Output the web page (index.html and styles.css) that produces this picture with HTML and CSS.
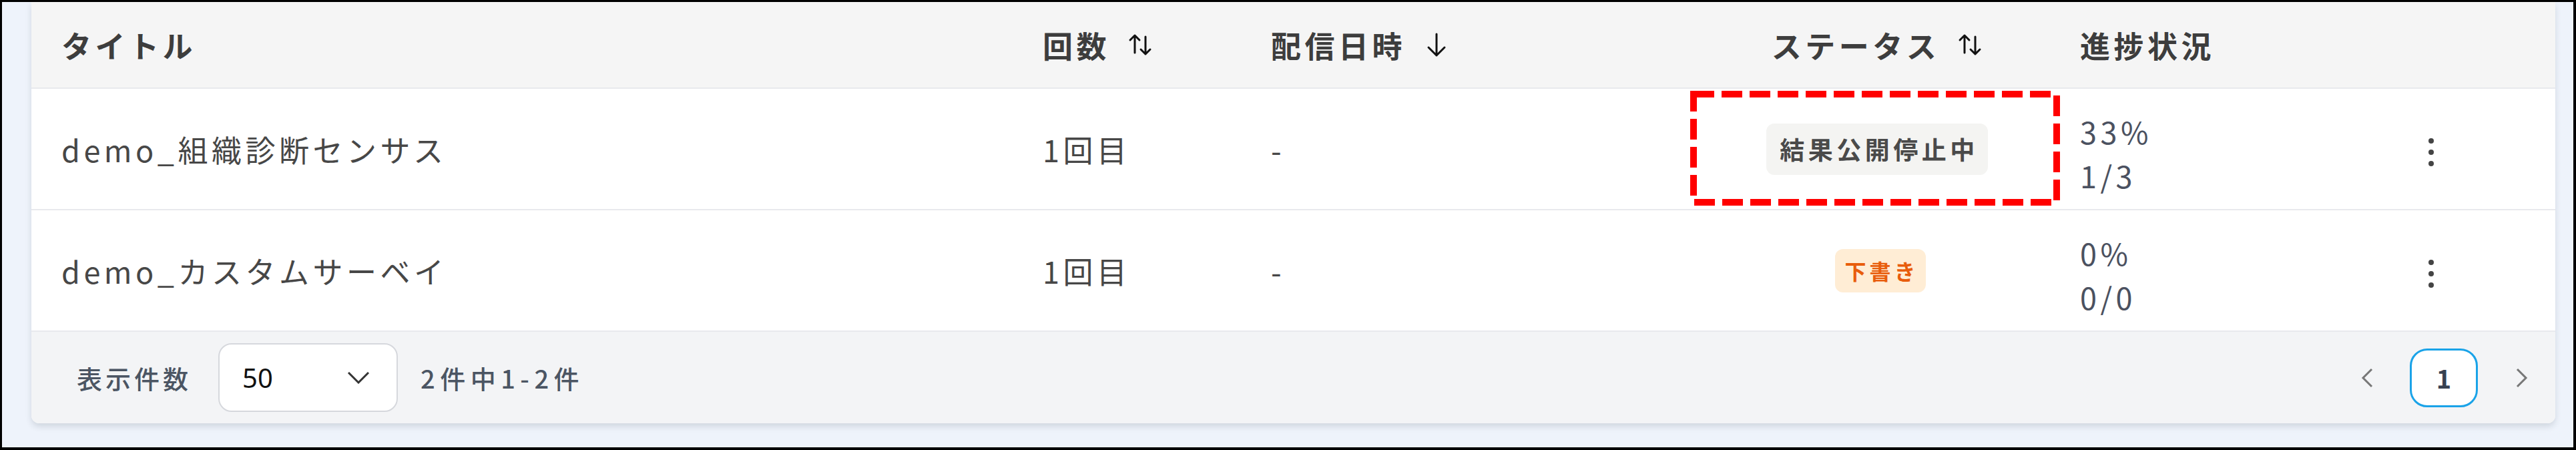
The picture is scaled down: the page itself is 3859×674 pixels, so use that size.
FILE: index.html
```html
<!DOCTYPE html>
<html lang="ja">
<head>
  <meta charset="UTF-8">
  <title>配信一覧</title>
  <link rel="stylesheet" href="styles.css">
</head>
<body>
  <div class="frame">
    <div class="card">
      <div class="table-row table-head">
        <div class="cell">タイトル</div>
        <div class="cell">回数
          <svg class="sort-icon" viewBox="0 0 38 38"><path d="M11 31V5M4 12l7-7 7 7M27 7v26M20 26l7 7 7-7" fill="none" stroke="#111" stroke-width="3" stroke-linecap="round" stroke-linejoin="round"/></svg>
        </div>
        <div class="cell">配信日時
          <svg class="down-icon" viewBox="0 0 36 38"><path d="M18 3v32M6 23l12 12 12-12" fill="none" stroke="#111" stroke-width="3" stroke-linecap="round" stroke-linejoin="round"/></svg>
        </div>
        <div class="cell cell-center">ステータス
          <svg class="sort-icon" viewBox="0 0 38 38"><path d="M11 31V5M4 12l7-7 7 7M27 7v26M20 26l7 7 7-7" fill="none" stroke="#111" stroke-width="3" stroke-linecap="round" stroke-linejoin="round"/></svg>
        </div>
        <div class="cell">進捗状況</div>
        <div class="cell"></div>
      </div>

      <div class="table-row">
        <div class="cell title">demo_組織診断センサス</div>
        <div class="cell">1回目</div>
        <div class="cell">-</div>
        <div class="cell cell-center status-cell">
          <span class="badge badge-stop">結果公開停止中</span>
          <svg class="highlight" viewBox="0 0 554 172"><rect x="5" y="5" width="544" height="162" fill="none" stroke="#ff0000" stroke-width="10" stroke-dasharray="31 11"/></svg>
        </div>
        <div class="cell progress"><span>33%</span><span>1/3</span></div>
        <div class="cell cell-center">
          <svg class="kebab" viewBox="0 0 10 44"><circle cx="5" cy="5" r="4"/><circle cx="5" cy="22" r="4"/><circle cx="5" cy="39" r="4"/></svg>
        </div>
      </div>

      <div class="table-row">
        <div class="cell title">demo_カスタムサーベイ</div>
        <div class="cell">1回目</div>
        <div class="cell">-</div>
        <div class="cell cell-center">
          <span class="badge badge-draft">下書き</span>
        </div>
        <div class="cell progress"><span>0%</span><span>0/0</span></div>
        <div class="cell cell-center">
          <svg class="kebab" viewBox="0 0 10 44"><circle cx="5" cy="5" r="4"/><circle cx="5" cy="22" r="4"/><circle cx="5" cy="39" r="4"/></svg>
        </div>
      </div>

      <div class="table-footer">
        <div class="per-page">
          <span class="footer-label">表示件数</span>
          <div class="select">
            <span>50</span>
            <svg viewBox="0 0 34 19"><path d="M2 2l15 15 15-15" fill="none" stroke="#333" stroke-width="3"/></svg>
          </div>
          <span class="footer-label count">2件中1-2件</span>
        </div>
        <div class="pager">
          <svg class="pager-arrow" viewBox="0 0 20 30"><path d="M17 2L4 15l13 13" fill="none" stroke="#777" stroke-width="3"/></svg>
          <span class="page current">1</span>
          <svg class="pager-arrow" viewBox="0 0 20 30"><path d="M3 2l13 13L3 28" fill="none" stroke="#777" stroke-width="3"/></svg>
        </div>
      </div>
    </div>
  </div>
</body>
</html>
```

FILE: styles.css
```css
* {
  margin: 0;
  padding: 0;
  box-sizing: border-box;
}

body {
  font-family: 'Noto Sans CJK JP', 'Noto Sans', sans-serif;
  background: #ffffff;
}

.frame {
  width: 3859px;
  height: 674px;
  border: solid #000;
  border-width: 3px 4px 4px 3px;
  background: #eef3fb;
  padding: 0 27px 0 44px;
  overflow: hidden;
}

.card {
  background: #ffffff;
  border-radius: 0 0 12px 12px;
  box-shadow: 0 5px 10px rgba(30, 40, 60, 0.14);
}

.table-row {
  display: grid;
  grid-template-columns: 1470px 342px 694px 518px 384px 1fr;
  align-items: center;
  height: 182px;
  border-bottom: 2px solid #e8e9ed;
  font-size: 45px;
  letter-spacing: 5.5px;
  color: #474747;
}

.table-head {
  height: 130px;
  background: #f5f5f5;
  font-weight: 700;
  color: #3d3d3d;
}

.cell {
  padding: 0 45px;
  display: flex;
  align-items: center;
  white-space: nowrap;
  position: relative;
}

.cell-center {
  justify-content: center;
}

.sort-icon {
  width: 38px;
  height: 38px;
  margin-left: 26px;
}

.down-icon {
  width: 36px;
  height: 38px;
  margin-left: 28px;
}

.progress {
  flex-direction: column;
  align-items: flex-start;
  line-height: 66px;
  padding-top: 14px;
  color: #4b5160;
}

.badge {
  font-weight: 700;
  border-radius: 12px;
  line-height: 1;
}

.badge-stop {
  background: #f4f4f2;
  color: #4a4a4a;
  font-size: 37px;
  letter-spacing: 5.5px;
  padding: 20px 14px 20px 20px;
}

.badge-draft {
  background: #ffedd5;
  color: #e85d0c;
  font-size: 32px;
  letter-spacing: 5px;
  padding: 16px 10px 17px 14px;
  margin-left: 10px;
}

.highlight {
  position: absolute;
  left: -21px;
  top: -49px;
  width: 554px;
  height: 172px;
}

.kebab {
  width: 10px;
  height: 44px;
  fill: #444;
  margin-top: 10px;
}

.table-footer {
  height: 137px;
  background: #f3f4f6;
  border-radius: 0 0 12px 12px;
  display: flex;
  align-items: center;
  justify-content: space-between;
  padding: 0 40px 0 68px;
}

.per-page {
  display: flex;
  align-items: center;
}

.footer-label {
  font-size: 38px;
  font-weight: 500;
  letter-spacing: 5px;
  color: #4b5563;
}

.footer-label.count {
  letter-spacing: 7.5px;
}

.select {
  width: 269px;
  height: 103px;
  margin: 0 34px 0 40px;
  background: #ffffff;
  border: 2px solid #d6d8dd;
  border-radius: 20px;
  display: flex;
  align-items: center;
  justify-content: space-between;
  padding: 0 40px 0 34px;
  font-family: 'Noto Sans', sans-serif;
  font-size: 40px;
  color: #111;
}

.select svg {
  width: 34px;
  height: 19px;
}

.pager {
  display: flex;
  align-items: center;
}

.pager-arrow {
  width: 20px;
  height: 30px;
}

.page {
  width: 102px;
  height: 88px;
  margin: 0 56px 0 54px;
  display: flex;
  align-items: center;
  justify-content: center;
  background: #ffffff;
  border: 3px solid #1aa3e8;
  border-radius: 26px;
  font-size: 38px;
  font-weight: 700;
  color: #374151;
}
```
